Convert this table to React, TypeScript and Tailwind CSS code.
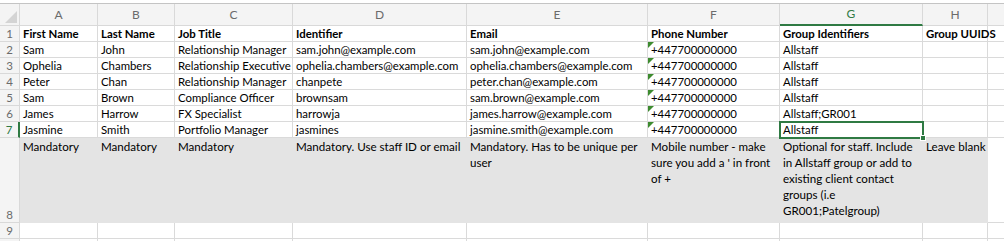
import React from "react";

const cols = ["A", "B", "C", "D", "E", "F", "G", "H"];

const rows: string[][] = [
  ["First Name", "Last Name", "Job Title", "Identifier", "Email", "Phone Number", "Group Identifiers", "Group UUIDS"],
  ["Sam", "John", "Relationship Manager", "sam.john@example.com", "sam.john@example.com", "+447700000000", "Allstaff", ""],
  ["Ophelia", "Chambers", "Relationship Executive", "ophelia.chambers@example.com", "ophelia.chambers@example.com", "+447700000000", "Allstaff", ""],
  ["Peter", "Chan", "Relationship Manager", "chanpete", "peter.chan@example.com", "+447700000000", "Allstaff", ""],
  ["Sam", "Brown", "Compliance Officer", "brownsam", "sam.brown@example.com", "+447700000000", "Allstaff", ""],
  ["James", "Harrow", "FX Specialist", "harrowja", "james.harrow@example.com", "+447700000000", "Allstaff;GR001", ""],
  ["Jasmine", "Smith", "Portfolio Manager", "jasmines", "jasmine.smith@example.com", "+447700000000", "Allstaff", ""],
];

const notes = [
  "Mandatory",
  "Mandatory",
  "Mandatory",
  "Mandatory. Use staff ID or email",
  "Mandatory. Has to be unique per user",
  "Mobile number - make sure you add a ' in front of +",
  "Optional for staff. Include in Allstaff group or add to existing client contact groups (i.e GR001;Patelgroup)",
  "Leave blank",
];

// ── cell helpers ──────────────────────────────────────────────
function RowHead({ n, tall, active }: { n?: number; tall?: boolean; active?: boolean }) {
  return (
    <div
      className={`flex justify-center border-b border-r border-[#d9d9d9] bg-[#f4f4f4] text-[11.5px] leading-[15px] ${
        tall ? "items-end" : "items-center"
      } ${active ? "border-r-2 border-r-[#2f7a43] text-[#2f7a43]" : "text-[#6b6b6b]"}`}
    >
      {n}
    </div>
  );
}

function Cell({ text, bold, flag }: { text: string; bold?: boolean; flag?: boolean }) {
  return (
    <div
      className={`relative whitespace-nowrap border-b border-r border-[#dadada] bg-white pl-[3px] text-[11.4px] leading-[15px] text-black ${
        bold ? "font-bold" : ""
      }`}
    >
      {flag && (
        <svg className="absolute left-0 top-0" width="6" height="6" viewBox="0 0 6 6">
          <path d="M0 0H6L0 6Z" fill="#3d8b2f" />
        </svg>
      )}
      {text}
    </div>
  );
}

export default function App() {
  return (
    <div
      className="relative h-[241px] w-[1004px] overflow-hidden bg-white"
      style={{ fontFamily: "Lato, 'Open Sans', sans-serif" }}
    >
      <div className="h-[4px] border-b border-[#c4c4c4]" />
      <div className="grid grid-cols-[20px_78px_77px_118px_174px_181px_132px_143px_65px_1fr] grid-rows-[22px_repeat(7,16px)_85px_16px_16px]">
        {/* column header row */}
        <div className="relative border-b border-r border-[#d9d9d9] bg-[#f4f4f4]">
          <svg className="absolute bottom-[2px] right-[2px]" width="12" height="12" viewBox="0 0 12 12">
            <path d="M12 0V12H0Z" fill="#d4d4d4" />
          </svg>
        </div>
        {cols.map((c) => (
          <div
            key={c}
            className={`flex items-center justify-center border-r border-[#d9d9d9] bg-[#f4f4f4] text-[12px] ${
              c === "G" ? "border-b-2 border-b-[#2f7a43] text-[#2f7a43]" : "border-b text-[#6b6b6b]"
            }`}
          >
            {c}
          </div>
        ))}
        <div className="border-b border-[#d9d9d9] bg-[#f4f4f4]" />

        {/* data rows */}
        {rows.map((r, i) => (
          <React.Fragment key={i}>
            <RowHead n={i + 1} active={i === 6} />
            {r.map((t, j) => (
              <Cell key={j} text={t} bold={i === 0} flag={i > 0 && j === 5} />
            ))}
            <div className="border-b border-[#dadada]" />
          </React.Fragment>
        ))}

        {/* notes row */}
        <RowHead n={8} tall />
        {notes.map((t, j) => (
          <div
            key={j}
            className={`bg-[#e4e4e4] px-[3px] pt-[1px] text-[11.6px] leading-[16px] text-black ${
              j === 7 ? "whitespace-nowrap" : ""
            }`}
          >
            {t}
          </div>
        ))}
        <div className="border-b border-[#dadada]" />

        <RowHead n={9} />
        {cols.map((c) => (
          <Cell key={c} text="" />
        ))}
        <div className="border-b border-[#dadada]" />

        <RowHead />
        {cols.map((c) => (
          <Cell key={c} text="" />
        ))}
        <div />
      </div>

      {/* selection box on G7 */}
      <div className="pointer-events-none absolute left-[779px] top-[121px] h-[18px] w-[145px] border-2 border-[#2f7a43]">
        <span className="absolute -bottom-[4px] -right-[4px] h-[6px] w-[6px] border border-white bg-[#2f7a43]" />
      </div>
    </div>
  );
}
